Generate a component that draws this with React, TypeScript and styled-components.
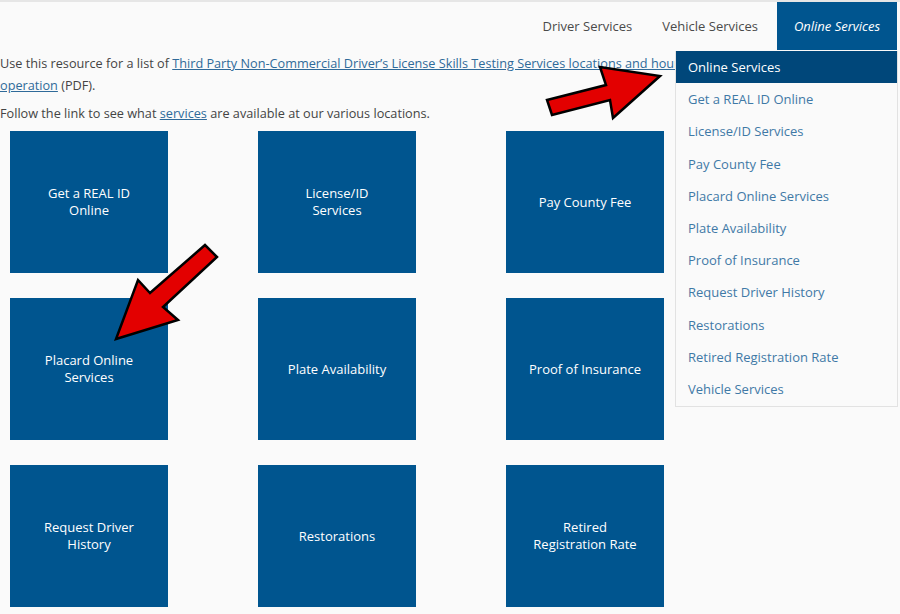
import styled, { createGlobalStyle } from 'styled-components';

const GlobalStyle = createGlobalStyle`
  html, body {
    margin: 0;
    padding: 0;
    background: #fafafa;
  }
  body {
    font-family: 'Open Sans', 'Liberation Sans', sans-serif;
    color: #444444;
  }
`;

const navItems = ['Driver Services', 'Vehicle Services', 'Online Services'];

const menuItems = [
  'Online Services',
  'Get a REAL ID Online',
  'License/ID Services',
  'Pay County Fee',
  'Placard Online Services',
  'Plate Availability',
  'Proof of Insurance',
  'Request Driver History',
  'Restorations',
  'Retired Registration Rate',
  'Vehicle Services',
];

const tiles = [
  ['Get a REAL ID', 'Online'],
  ['License/ID', 'Services'],
  ['Pay County Fee'],
  ['Placard Online', 'Services'],
  ['Plate Availability'],
  ['Proof of Insurance'],
  ['Request Driver', 'History'],
  ['Restorations'],
  ['Retired', 'Registration Rate'],
];

const App = () => {
  return (
    <Page>
      <GlobalStyle />
      <TopStrip />
      <Header>
        <Nav>
          {navItems.map((item, i) => (
            <NavItem key={item} active={i === navItems.length - 1}>
              {item}
            </NavItem>
          ))}
        </Nav>
        <Dropdown>
          {menuItems.map((item, i) => (
            <MenuItem key={item} active={i === 0}>
              {item}
            </MenuItem>
          ))}
        </Dropdown>
      </Header>
      <Content>
        <Paragraph>
          Use this resource for a list of{' '}
          <Link>Third Party Non-Commercial Driver’s License Skills Testing Services locations and hours of operation</Link>{' '}
          (PDF).
        </Paragraph>
        <Paragraph>
          Follow the link to see what <Link>services</Link> are available at our various locations.
        </Paragraph>
        <TileGrid>
          {tiles.map((lines) => (
            <Tile key={lines.join(' ')}>
              {lines.map((line) => (
                <span key={line}>{line}</span>
              ))}
            </Tile>
          ))}
        </TileGrid>
      </Content>
      <Annotations width="900" height="614" viewBox="0 0 900 614">
        <polygon
          points="547,100 606,85 600,67 660,76 613,118 610,100 552,115"
          fill="#e30000"
          stroke="#000"
          strokeWidth="2.5"
          strokeLinejoin="miter"
        />
        <polygon
          points="205,245 150,293 138,280 116,339 178,320 163,307 217,257"
          fill="#e30000"
          stroke="#000"
          strokeWidth="2.5"
          strokeLinejoin="miter"
        />
      </Annotations>
    </Page>
  );
};

const Page = styled.div`
  position: relative;
  width: 900px;
  height: 614px;
  overflow: hidden;
  background: #fafafa;
`;

const TopStrip = styled.div`
  height: 2px;
  background: #e6e6e6;
`;

const Header = styled.div`
  position: relative;
  height: 48px;
  padding-right: 3px;
  display: flex;
  justify-content: flex-end;
`;

const Nav = styled.nav`
  display: flex;
  align-items: stretch;
`;

const NavItem = styled.div<{ active?: boolean }>`
  display: flex;
  align-items: center;
  justify-content: center;
  box-sizing: border-box;
  padding: 0 15px;
  margin-left: ${(p) => (p.active ? '4px' : '0')};
  width: ${(p) => (p.active ? '120px' : 'auto')};
  font-size: 13px;
  color: ${(p) => (p.active ? '#ffffff' : '#4a4a4a')};
  font-style: ${(p) => (p.active ? 'italic' : 'normal')};
  background: ${(p) => (p.active ? '#00558f' : 'transparent')};
`;

const Dropdown = styled.div`
  position: absolute;
  top: 49px;
  right: 2px;
  width: 223px;
  box-sizing: border-box;
  background: #fafafa;
  border: 1px solid #e2e2e2;
  border-top: none;
  padding-bottom: 1px;
  z-index: 2;
`;

const MenuItem = styled.div<{ active?: boolean }>`
  height: 32.2px;
  display: flex;
  align-items: center;
  padding-left: 12px;
  font-size: 13px;
  color: ${(p) => (p.active ? '#ffffff' : '#3f79a6')};
  background: ${(p) => (p.active ? '#00477a' : 'transparent')};
`;

const Content = styled.div`
  padding-top: 2px;
`;

const Paragraph = styled.p`
  margin: 0 0 6px;
  font-size: 12.7px;
  line-height: 22px;
  max-width: 735px;
`;

const Link = styled.a`
  color: #2f6a99;
  text-decoration: underline;
`;

const TileGrid = styled.div`
  display: grid;
  grid-template-columns: repeat(3, 158px);
  grid-auto-rows: 142px;
  column-gap: 90px;
  row-gap: 25px;
  margin: 7px 0 0 10px;
`;

const Tile = styled.div`
  background: #00558f;
  color: #ffffff;
  display: flex;
  flex-direction: column;
  align-items: center;
  justify-content: center;
  text-align: center;
  font-size: 13px;
  line-height: 17px;
`;

const Annotations = styled.svg`
  position: absolute;
  top: 0;
  left: 0;
  pointer-events: none;
  z-index: 3;
`;

export default App;
